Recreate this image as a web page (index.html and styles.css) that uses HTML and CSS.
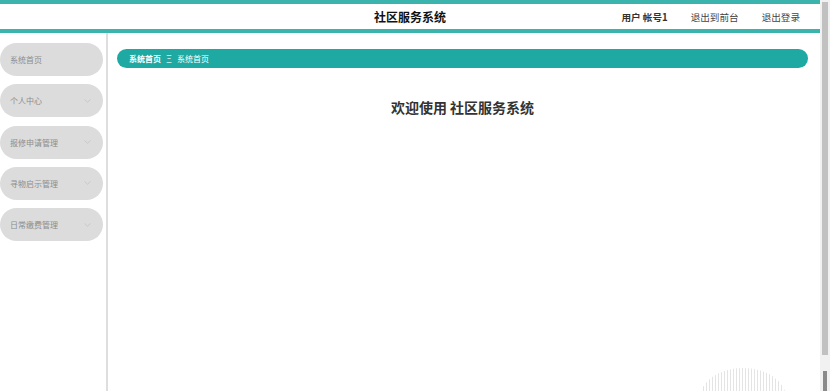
FILE: index.html
```html
<!DOCTYPE html>
<html lang="zh-CN">
<head>
  <meta charset="UTF-8" />
  <meta name="viewport" content="width=device-width, initial-scale=1.0" />
  <title>社区服务系统</title>
  <link rel="stylesheet" href="styles.css">
</head>
<body>
  <div class="app">
    <div class="page">
      <header class="topbar">
        <div></div>
        <div class="brand">社区服务系统</div>
        <div class="top-links">
          <span class="user">用户 帐号1</span>
          <a href="#">退出到前台</a>
          <a href="#">退出登录</a>
        </div>
      </header>

      <div class="layout">
        <aside class="sidebar">
          <div class="menu-item">系统首页</div>
          <div class="menu-item">个人中心
            <svg class="chev" width="7" height="4" viewBox="0 0 7 4"><path d="M0.5 0.5 L3.5 3.3 L6.5 0.5" fill="none" stroke="#c4c4c4" stroke-width="0.8"/></svg>
          </div>
          <div class="menu-item">报修申请管理
            <svg class="chev" width="7" height="4" viewBox="0 0 7 4"><path d="M0.5 0.5 L3.5 3.3 L6.5 0.5" fill="none" stroke="#c4c4c4" stroke-width="0.8"/></svg>
          </div>
          <div class="menu-item">寻物启示管理
            <svg class="chev" width="7" height="4" viewBox="0 0 7 4"><path d="M0.5 0.5 L3.5 3.3 L6.5 0.5" fill="none" stroke="#c4c4c4" stroke-width="0.8"/></svg>
          </div>
          <div class="menu-item">日常缴费管理
            <svg class="chev" width="7" height="4" viewBox="0 0 7 4"><path d="M0.5 0.5 L3.5 3.3 L6.5 0.5" fill="none" stroke="#c4c4c4" stroke-width="0.8"/></svg>
          </div>
        </aside>

        <main class="content">
          <div class="breadcrumb">
            <span class="crumb-home">系统首页</span>
            <span class="crumb-sep">Ξ</span>
            <span>系统首页</span>
          </div>
          <h1 class="welcome">欢迎使用 社区服务系统</h1>
        </main>
      </div>

      <div class="deco"></div>
    </div>

    <div class="scrollbar">
      <div class="thumb"></div>
      <div class="thumb-low"></div>
    </div>
  </div>
</body>
</html>
```

FILE: styles.css
```css
body {
  margin: 0;
  padding: 0;
  background-color: #fff;
  font-family: "Noto Sans CJK SC", "Noto Sans", sans-serif;
  color: #333;
}

.app {
  display: flex;
  height: 100vh;
  overflow: hidden;
}

.page {
  flex: 1;
  display: flex;
  flex-direction: column;
  position: relative;
  overflow: hidden;
}

.topbar {
  display: grid;
  grid-template-columns: 1fr auto 1fr;
  align-items: center;
  height: 25px;
  border-top: 4px solid #3ab4ad;
  border-bottom: 4px solid #3ab4ad;
  background-color: #fff;
}

.brand {
  font-size: 12px;
  font-weight: bold;
  color: #111;
}

.top-links {
  display: flex;
  justify-content: flex-end;
  gap: 23px;
  padding-right: 20px;
  font-size: 9.6px;
}

.top-links .user {
  font-weight: bold;
  color: #333;
}

.top-links a {
  color: #444;
  text-decoration: none;
}

.layout {
  flex: 1;
  display: flex;
}

.sidebar {
  width: 106px;
  border-right: 2px solid #dedede;
  padding-top: 10px;
  display: flex;
  flex-direction: column;
  gap: 8.3px;
}

.menu-item {
  width: 103px;
  height: 33px;
  padding: 0 12px 0 10px;
  box-sizing: border-box;
  display: flex;
  align-items: center;
  justify-content: space-between;
  background-color: #dcdcdc;
  border-radius: 17px;
  font-size: 8px;
  color: #8c8c8c;
}

.chev {
  display: block;
}

.content {
  flex: 1;
  padding: 16px 12px 0 9px;
}

.breadcrumb {
  height: 19px;
  display: flex;
  align-items: center;
  gap: 5px;
  padding-left: 12px;
  background-color: #1ea9a3;
  border-radius: 10px;
  color: #fff;
  font-size: 8px;
}

.crumb-home {
  font-weight: bold;
}

.crumb-sep {
  font-size: 10px;
  line-height: 1;
  color: #d8f2f0;
}

.welcome {
  margin: 29px 0 0;
  text-align: center;
  font-size: 14px;
  font-weight: bold;
  color: #333;
}

.deco {
  position: absolute;
  left: 700px;
  top: 368px;
  width: 86px;
  height: 60px;
  border-radius: 50% 50% 0 0;
  background: repeating-linear-gradient(90deg, #e4e4e4 0 1px, transparent 1px 3px);
}

.scrollbar {
  width: 10px;
  background-color: #f1f1f1;
  display: flex;
  flex-direction: column;
  align-items: center;
}

.thumb {
  width: 6px;
  height: 353px;
  margin-top: 2px;
  background-color: #c1c1c1;
}

.thumb-low {
  width: 4px;
  margin-top: auto;
  height: 20px;
  background-color: #8a8a8a;
}
```
